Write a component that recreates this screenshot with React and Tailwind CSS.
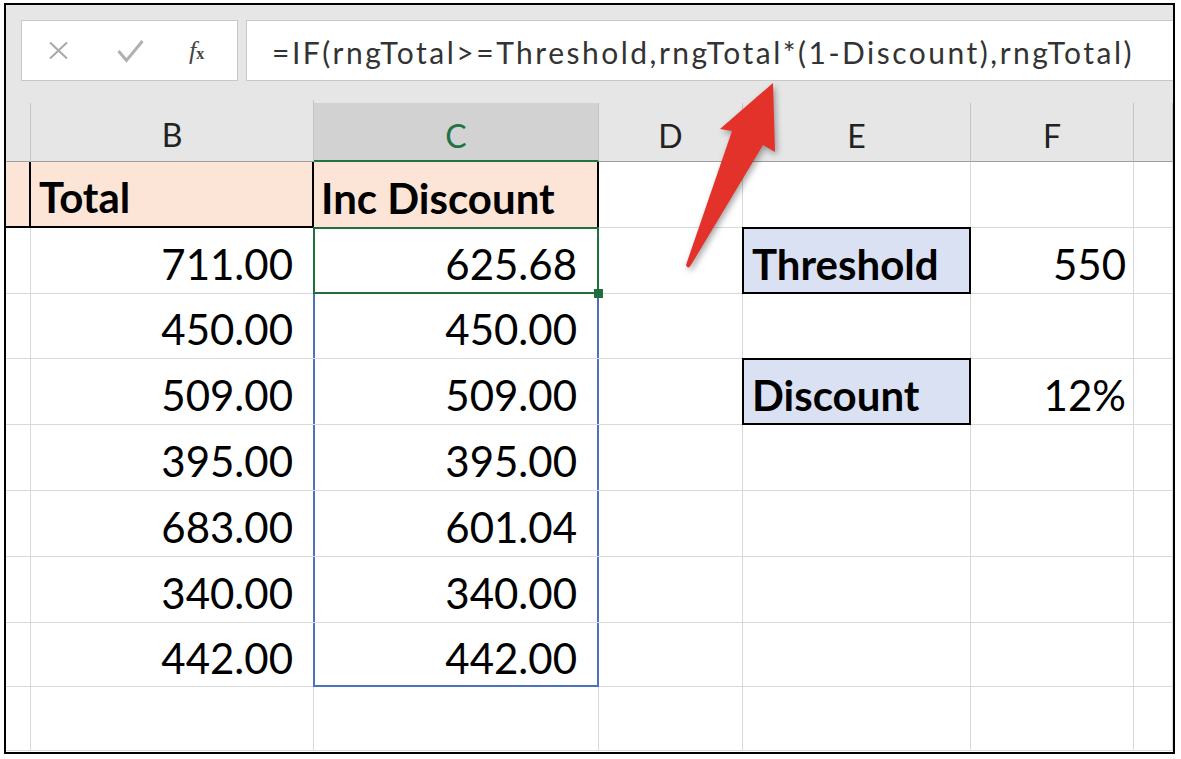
import React from "react";

const gridCols = "grid grid-cols-[25px_283px_285px_144px_228px_163px_1fr]";

const rows = [
  { h: "h-[66px]", b: "711.00", c: "625.68", e: "Threshold", f: "550" },
  { h: "h-[65px]", b: "450.00", c: "450.00" },
  { h: "h-[66px]", b: "509.00", c: "509.00", e: "Discount", f: "12%" },
  { h: "h-[66px]", b: "395.00", c: "395.00" },
  { h: "h-[66px]", b: "683.00", c: "601.04" },
  { h: "h-[66px]", b: "340.00", c: "340.00" },
  { h: "h-[64px]", b: "442.00", c: "442.00" },
  { h: "h-[64px]", b: "", c: "" },
];

const cell = "relative border-r border-b border-[#d9d9d9]";
const num = "text-[42px] leading-none text-black font-[Lato,sans-serif]";

function HeaderRow() {
  const letters = ["", "B", "C", "D", "E", "F", ""];
  return (
    <div className={`${gridCols} h-[62px] bg-[#e6e6e6]`}>
      {letters.map((l, i) => (
        <div
          key={i}
          className={`flex items-center justify-center pt-[8px] text-[32px] leading-none font-[Lato,sans-serif] ${
            l === "C"
              ? "bg-[#d2d2d2] text-[#217346] border-b-2 border-b-[#217346] border-r border-r-[#c4c4c4]"
              : "text-[#222] border-b border-b-[#9e9e9e] border-r border-r-[#c4c4c4]"
          } ${i === 1 ? "" : "mt-[3px]"}`}
        >
          {l}
        </div>
      ))}
    </div>
  );
}

function TitleRow() {
  return (
    <div className={`${gridCols} h-[66px]`}>
      <div className="bg-[#fce4d6] border-r-2 border-r-black border-b-2 border-b-black" />
      <div className="bg-[#fce4d6] border-r-2 border-r-black border-b-2 border-b-black flex items-center pl-[8px] pt-[6px] text-[42px] leading-none font-bold font-[Lato,sans-serif] text-black">
        Total
      </div>
      <div className="relative bg-[#fce4d6] border-r-2 border-r-black flex items-center pl-[7px] pt-[6px] text-[42px] leading-none font-bold font-[Lato,sans-serif] text-black">
        Inc Discount
      </div>
      <div className={cell} />
      <div className={cell} />
      <div className={cell} />
      <div className={cell} />
    </div>
  );
}

function DataRow({ r, idx }) {
  const boxed = r.e
    ? "bg-[#d9e1f2] border-2 border-black"
    : "border-r border-b border-[#d9d9d9]";
  return (
    <div className={`${gridCols} ${r.h}`}>
      <div className={cell} />
      <div className={`${cell} flex items-center justify-end pr-[20px] pt-[6px] ${num}`}>{r.b}</div>
      <div className={`${cell} flex items-center justify-end pr-[21px] pt-[6px] ${num} ${idx === 0 ? "z-10" : ""}`}>
        {r.c}
        {idx === 0 && (
          <>
            <div className="absolute -left-[1px] -top-[1px] -right-[1px] -bottom-[1px] border-2 border-[#1e6e3e]" />
            <div className="absolute -right-[5px] -bottom-[5px] w-[9px] h-[9px] bg-[#1e6e3e]" />
          </>
        )}
        {idx > 0 && idx < 7 && (
          <div
            className={`absolute -left-[1px] -right-[1px] top-0 border-x-2 border-[#4a72c0] ${
              idx === 6 ? "-bottom-[1px] border-b-2" : "bottom-0"
            }`}
          />
        )}
      </div>
      <div className={cell} />
      <div className={`relative flex items-center pl-[8px] pt-[6px] ${boxed} ${r.e ? "-ml-[1px] -mt-[1px] font-bold text-[42px] leading-none font-[Lato,sans-serif]" : ""}`}>
        {r.e}
      </div>
      <div className={`${cell} flex items-center justify-end pr-[7px] pt-[6px] ${num}`}>{r.f}</div>
      <div className={cell} />
    </div>
  );
}

export default function App() {
  return (
    <div className="relative w-[1181px] h-[759px] bg-white pt-[3px] pl-[4px] overflow-hidden">
      <div className="w-[1171px] h-[751px] border-2 border-black bg-white flex flex-col overflow-hidden">
        {/* formula bar */}
        <div className="h-[95px] shrink-0 bg-[#e6e6e6] flex items-start pt-[15px] pl-[15px] gap-[8px]">
          <div className="w-[217px] h-[61px] bg-white border border-[#c8c8c8] flex items-center">
            <svg className="ml-[26px]" width="21" height="19" viewBox="0 0 21 19" fill="none">
              <path d="M2 1.5 L19 17.5 M19 1.5 L2 17.5" stroke="#a8a8a8" strokeWidth="2" />
            </svg>
            <svg className="ml-[48px]" width="27" height="24" viewBox="0 0 27 24" fill="none">
              <path d="M1.5 12 L9.5 21.5 L25.5 2" stroke="#b0b0b0" strokeWidth="3" />
            </svg>
            <span className="ml-[45px] font-['Liberation_Serif',serif] italic text-[#444] text-[26px] leading-none">
              f<span className="text-[16px] not-italic font-bold">x</span>
            </span>
          </div>
          <div className="flex-1 h-[61px] bg-white border border-[#c8c8c8] border-r-0 flex items-center pl-[25px] pt-[2px]">
            <span className="font-[Lato,sans-serif] text-[30px] tracking-[2.5px] leading-none text-[#333] whitespace-nowrap">
              {"=IF(rngTotal>=Threshold,rngTotal*(1-Discount),rngTotal)"}
            </span>
          </div>
        </div>

        <HeaderRow />
        <TitleRow />
        {rows.map((r, i) => (
          <DataRow key={i} r={r} idx={i} />
        ))}
      </div>

      <svg
        className="absolute left-0 top-0 pointer-events-none drop-shadow-[2px_3px_3px_rgba(0,0,0,0.35)]"
        width="1181"
        height="759"
        viewBox="0 0 1181 759"
      >
        <path
          d="M773 83 L775 152 L763 145 L691 265 Q688 270 686 265 L732 131 L720 129 Z"
          fill="#e2322a"
        />
      </svg>
    </div>
  );
}
